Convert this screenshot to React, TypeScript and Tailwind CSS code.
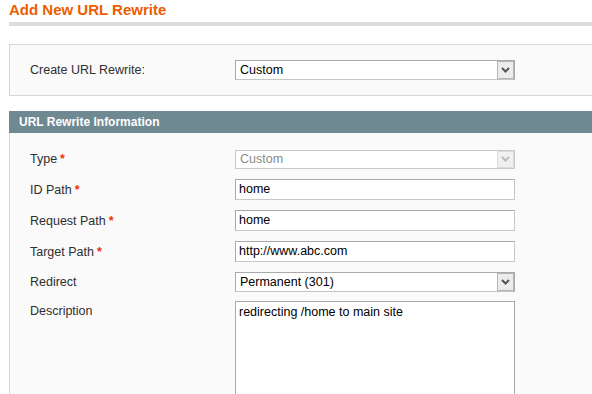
import React from "react";

function Chevron({ disabled }: { disabled?: boolean }) {
  return (
    <svg width="9" height="6" viewBox="0 0 9 6" className="block">
      <path
        d="M1 1 L4.5 4.5 L8 1"
        fill="none"
        stroke={disabled ? "#bdbdbd" : "#555555"}
        strokeWidth="2"
      />
    </svg>
  );
}

function FakeSelect({ value, disabled }: { value: string; disabled?: boolean }) {
  return (
    <div
      className={
        "flex w-[280px] items-stretch border bg-white " +
        (disabled ? "h-[19px] border-[#c8c8c8]" : "h-[20px] border-[#aaaaaa] border-b-[#c4c4c4]")
      }
    >
      <span
        className={
          "flex-1 pl-[4px] text-[12.5px] " +
          (disabled ? "leading-[17px] text-[#8a8a8a]" : "leading-[18px] text-black")
        }
      >
        {value}
      </span>
      <span
        className={
          "flex w-[17px] items-center justify-center border " +
          (disabled
            ? "border-[#dcdcdc] bg-[#f0f0f0]"
            : "border-[#b5b5b5] bg-[#ececec]")
        }
      >
        <Chevron disabled={disabled} />
      </span>
    </div>
  );
}

function TextField({ value }: { value: string }) {
  return (
    <div className="h-[21px] w-[280px] border border-[#aaaaaa] border-b-[#c8c8c8] border-r-[#c8c8c8] bg-white pl-[3px] text-[12.5px] leading-[19px] text-black">
      {value}
    </div>
  );
}

function Label({ text, required }: { text: string; required?: boolean }) {
  return (
    <span className="w-[205px] shrink-0 text-[12.5px] leading-[20px] text-[#2f2f2f]">
      {text}
      {required ? <span className="ml-[3px] font-bold text-[#eb340a]">*</span> : null}
    </span>
  );
}

export default function App() {
  return (
    <div className="h-[394px] w-[592px] overflow-hidden bg-white pl-[9px] font-['Liberation_Sans',Arial,sans-serif]">
      <h1 className="h-[22px] pt-[1px] text-[15px] font-bold leading-[18px] text-[#eb5e00]">
        Add New URL Rewrite
      </h1>
      <div className="h-[4px] bg-[#dddddd]" />

      <div className="mt-[18px] flex h-[52px] items-center border border-r-0 border-[#d6d6d6] bg-[#fafafa] pl-[20px]">
        <span className="w-[205px] shrink-0 text-[12.5px] text-[#2f2f2f]">Create URL Rewrite:</span>
        <FakeSelect value="Custom" />
      </div>

      <div className="mt-[15px] h-[22px] bg-[#6f8992] pl-[10px] text-[12px] font-bold leading-[22px] text-white">
        URL Rewrite Information
      </div>

      <div className="flex h-[300px] flex-col gap-[10px] border-l border-[#d6d6d6] bg-[#fafafa] pl-[20px] pt-[16px]">
        <div className="flex items-center">
          <Label text="Type" required />
          <FakeSelect value="Custom" disabled />
        </div>
        <div className="flex items-center">
          <Label text="ID Path" required />
          <TextField value="home" />
        </div>
        <div className="flex items-center">
          <Label text="Request Path" required />
          <TextField value="home" />
        </div>
        <div className="flex items-center">
          <Label text="Target Path" required />
          <TextField value="http://www.abc.com" />
        </div>
        <div className="flex items-center">
          <Label text="Redirect" />
          <FakeSelect value="Permanent (301)" />
        </div>
        <div className="-mt-[1px] flex items-start">
          <span className="w-[205px] shrink-0 text-[12.5px] leading-[20px] text-[#2f2f2f]">
            Description
          </span>
          <div className="h-[120px] w-[280px] border border-[#aaaaaa] bg-white pl-[3px] pt-[2px] text-[12.5px] leading-[16px] text-black">
            redirecting /home to main site
          </div>
        </div>
      </div>
    </div>
  );
}
